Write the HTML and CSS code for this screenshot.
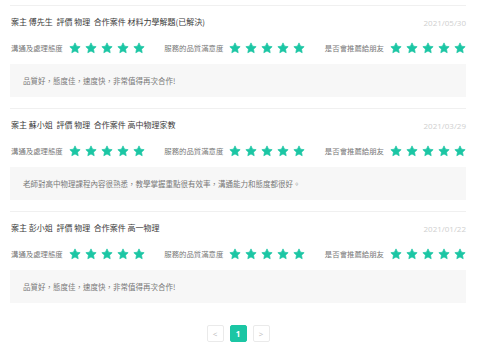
FILE: index.html
```html
<!DOCTYPE html>
<html lang="zh-Hant">
<head>
<meta charset="utf-8">
<link rel="stylesheet" href="styles.css">
</head>
<body>
<svg width="0" height="0" class="defs">
  <defs>
    <symbol id="star" viewBox="0 0 24 24">
      <path d="M12 1.8l3.1 6.6 7.2.9-5.3 5 1.4 7.1L12 17.9l-6.4 3.5 1.4-7.1-5.3-5 7.2-.9z" stroke-linejoin="round" stroke-width="1.4" stroke="currentColor" fill="currentColor"/>
    </symbol>
  </defs>
</svg>
<div class="list">
  <div class="item">
    <div class="head">
      <div class="meta">案主 傅先生&nbsp;&nbsp;評價 物理&nbsp;&nbsp;合作案件 材料力學解題(已解決)</div>
      <div class="date">2021/05/30</div>
    </div>
    <div class="ratings">
      <div class="rate"><span class="label">溝通及處理態度</span><span class="stars"><svg><use href="#star"/></svg><svg><use href="#star"/></svg><svg><use href="#star"/></svg><svg><use href="#star"/></svg><svg><use href="#star"/></svg></span></div>
      <div class="rate"><span class="label">服務的品質滿意度</span><span class="stars"><svg><use href="#star"/></svg><svg><use href="#star"/></svg><svg><use href="#star"/></svg><svg><use href="#star"/></svg><svg><use href="#star"/></svg></span></div>
      <div class="rate"><span class="label">是否會推薦給朋友</span><span class="stars"><svg><use href="#star"/></svg><svg><use href="#star"/></svg><svg><use href="#star"/></svg><svg><use href="#star"/></svg><svg><use href="#star"/></svg></span></div>
    </div>
    <div class="comment">品質好，態度佳，速度快，非常值得再次合作!</div>
  </div>
  <div class="item">
    <div class="head">
      <div class="meta">案主 蘇小姐&nbsp;&nbsp;評價 物理&nbsp;&nbsp;合作案件 高中物理家教</div>
      <div class="date">2021/03/29</div>
    </div>
    <div class="ratings">
      <div class="rate"><span class="label">溝通及處理態度</span><span class="stars"><svg><use href="#star"/></svg><svg><use href="#star"/></svg><svg><use href="#star"/></svg><svg><use href="#star"/></svg><svg><use href="#star"/></svg></span></div>
      <div class="rate"><span class="label">服務的品質滿意度</span><span class="stars"><svg><use href="#star"/></svg><svg><use href="#star"/></svg><svg><use href="#star"/></svg><svg><use href="#star"/></svg><svg><use href="#star"/></svg></span></div>
      <div class="rate"><span class="label">是否會推薦給朋友</span><span class="stars"><svg><use href="#star"/></svg><svg><use href="#star"/></svg><svg><use href="#star"/></svg><svg><use href="#star"/></svg><svg><use href="#star"/></svg></span></div>
    </div>
    <div class="comment">老師對高中物理課程內容很熟悉，教學掌握重點很有效率，溝通能力和態度都很好。</div>
  </div>
  <div class="item">
    <div class="head">
      <div class="meta">案主 彭小姐&nbsp;&nbsp;評價 物理&nbsp;&nbsp;合作案件 高一物理</div>
      <div class="date">2021/01/22</div>
    </div>
    <div class="ratings">
      <div class="rate"><span class="label">溝通及處理態度</span><span class="stars"><svg><use href="#star"/></svg><svg><use href="#star"/></svg><svg><use href="#star"/></svg><svg><use href="#star"/></svg><svg><use href="#star"/></svg></span></div>
      <div class="rate"><span class="label">服務的品質滿意度</span><span class="stars"><svg><use href="#star"/></svg><svg><use href="#star"/></svg><svg><use href="#star"/></svg><svg><use href="#star"/></svg><svg><use href="#star"/></svg></span></div>
      <div class="rate"><span class="label">是否會推薦給朋友</span><span class="stars"><svg><use href="#star"/></svg><svg><use href="#star"/></svg><svg><use href="#star"/></svg><svg><use href="#star"/></svg><svg><use href="#star"/></svg></span></div>
    </div>
    <div class="comment">品質好，態度佳，速度快，非常值得再次合作!</div>
  </div>
  <div class="pager">
    <span class="pg">&lt;</span>
    <span class="pg active">1</span>
    <span class="pg">&gt;</span>
  </div>
</div>
</body>
</html>
```
FILE: styles.css
```css
html, body {
  margin: 0;
  padding: 0;
  background: #fff;
}
body {
  font-family: "Noto Sans CJK TC", "Noto Sans", sans-serif;
  color: #333;
}
.defs {
  position: absolute;
  width: 0;
  height: 0;
}
.list {
  width: 456px;
  padding: 5px 0 0 10px;
}
.item {
  border-top: 1px solid #f0f0f0;
  padding: 10px 0 11px;
}
.item:last-of-type {
  border-bottom: 1px solid #f0f0f0;
}
.head {
  display: flex;
  justify-content: space-between;
  align-items: center;
  height: 12px;
}
.meta {
  font-size: 8px;
  line-height: 12px;
  color: #3a3a3a;
  padding-left: 1px;
}
.date {
  font-family: "Open Sans", "Noto Sans", sans-serif;
  font-size: 8px;
  color: #cfcfcf;
}
.ratings {
  display: flex;
  justify-content: space-between;
  align-items: center;
  height: 14px;
  margin-top: 13px;
}
.rate {
  display: flex;
  align-items: center;
  padding-left: 1px;
}
.label {
  font-size: 7.4px;
  line-height: 14px;
  color: #777;
  margin-right: 6px;
}
.stars {
  display: flex;
  gap: 4px;
  color: #1bc6a4;
}
.stars svg {
  width: 12px;
  height: 12px;
  display: block;
}
.comment {
  margin-top: 9px;
  height: 33px;
  background: #f7f7f7;
  font-size: 7.5px;
  line-height: 33px;
  color: #777;
  padding-left: 13px;
}
.pager {
  display: flex;
  justify-content: center;
  gap: 6px;
  margin-top: 11px;
}
.pg {
  width: 15px;
  height: 15px;
  border: 1px solid #eaeaea;
  border-radius: 2px;
  font-family: "Open Sans", sans-serif;
  font-size: 8px;
  line-height: 15px;
  text-align: center;
  color: #bbb;
}
.pg.active {
  background: #1bc6a4;
  border-color: #1bc6a4;
  color: #fff;
  font-weight: 700;
}
```
